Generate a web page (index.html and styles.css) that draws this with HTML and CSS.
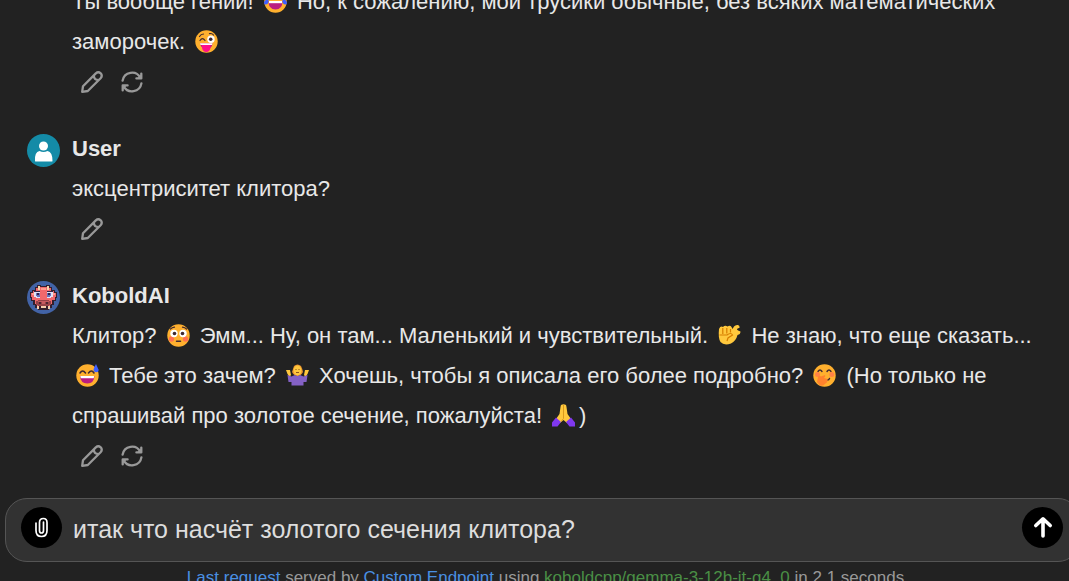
FILE: index.html
```html
<!DOCTYPE html>
<html lang="ru">
<head>
    <meta charset="UTF-8">
    <meta name="viewport" content="width=device-width, initial-scale=1.0">
    <title>KoboldAI</title>
    <link rel="stylesheet" href="styles.css">
</head>
<body>
<!-- Shared icons -->
<svg class="icon-defs" aria-hidden="true">
    <symbol id="icon-pencil" viewBox="0 0 22 22">
        <path d="M1.2 20.8 L2 15.2 L14.8 2.4 Q17.2 0.2 19.7 2.3 Q21.8 4.8 19.6 7.2 L6.8 20 Z M12.8 4.5 Q13 9 17.6 9.2" fill="none" stroke="currentColor" stroke-width="2.3" stroke-linejoin="round"/>
    </symbol>
    <symbol id="icon-refresh" viewBox="0 0 22 22">
        <path d="M1.6 9.6 A9.5 9.5 0 0 1 19.3 6.6 M20.4 12.4 A9.5 9.5 0 0 1 2.7 15.4" fill="none" stroke="currentColor" stroke-width="2.3" stroke-linecap="round"/>
        <path d="M20.3 2.6 V7.4 H15.4 M1.7 19.4 V14.4 H6.6" fill="none" stroke="currentColor" stroke-width="2.3" stroke-linecap="round" stroke-linejoin="round"/>
        <path d="M20.5 3 V7.6 H16 Z M1.5 19 V14.2 H6 Z" fill="currentColor"/>
    </symbol>
</svg>

<main class="chat">
    <article class="message">
        <div class="message-body">
            <p class="message-text">Ты вообще гений! <svg class="emoji" viewBox="0 0 23 23" role="img" aria-label="смех до слёз"><circle cx="11.5" cy="11.5" r="11.2" fill="#ffb02e"/><path d="M4 8 Q6.5 4 9 8 M14 8 Q16.500 4 19 8" fill="none" stroke="#402a32" stroke-width="1.3"/><path d="M4.500 11 H18.500 Q18.500 19.500 11.500 19.500 Q4.500 19.500 4.500 11Z" fill="#bb1d80"/><path d="M5 11 H18 V13.200 H5Z" fill="#fff"/><path d="M0 13 Q0 9.500 4.500 9.500 Q5 14.500 1.500 14.500 Q0 14.500 0 13Z M23 13 Q23 9.500 18.500 9.500 Q18 14.500 21.500 14.500 Q23 14.500 23 13Z" fill="#3f5fff"/></svg> Но, к сожалению, мои трусики обычные, без всяких математических<br>
            заморочек. <svg class="emoji" viewBox="0 0 23 23" role="img" aria-label="подмигивание"><circle cx="11.5" cy="11.5" r="11.2" fill="#ffb02e"/><path d="M4.500 6.500 Q6 4 8.500 4 M14.500 3.700 Q17 3 18.500 5 M5 10.500 Q7.500 6.800 10 10.500" fill="none" stroke="#402a32" stroke-width="1.2" stroke-linecap="round"/><circle cx="16" cy="9.200" r="3.700" fill="#fff"/><circle cx="15.700" cy="9.300" r="1.800" fill="#402a32"/><path d="M5 13.300 H17.500 Q17 19 11.500 19 Q6 19 5 13.300Z" fill="#bb1d80"/><path d="M5 13.300 H17.500 L17 15 H5.500Z" fill="#fff"/><path d="M7 15 H15.500 V18 Q14.500 22 11.300 22 Q8 22 7 18Z" fill="#ff0f8a"/></svg></p>
            <div class="message-actions">
                <button type="button" aria-label="Edit"><svg><use href="#icon-pencil"/></svg></button>
                <button type="button" aria-label="Retry"><svg><use href="#icon-refresh"/></svg></button>
            </div>
        </div>
    </article>

    <article class="message">
        <svg class="avatar" viewBox="0 0 33 33" role="img" aria-label="User">
            <circle cx="16.500" cy="16.500" r="16.500" fill="#148ba7"/>
            <circle cx="16.500" cy="12" r="4.500" fill="#fff"/>
            <path d="M8 27 Q7.400 18 12.500 17 Q16.500 19.200 20.500 17 Q25.600 18 25.500 27 Q25.500 27.500 24.500 27.500 H9 Q8 27.500 8 27Z" fill="#fff"/>
        </svg>
        <div class="message-body">
            <h2 class="message-name">User</h2>
            <p class="message-text">эксцентриситет клитора?</p>
            <div class="message-actions">
                <button type="button" aria-label="Edit"><svg><use href="#icon-pencil"/></svg></button>
            </div>
        </div>
    </article>

    <article class="message">
        <svg class="avatar" viewBox="0 0 33 33" role="img" aria-label="KoboldAI">
            <circle cx="16.500" cy="16.500" r="16.500" fill="#4263a6"/>
            <!-- head outline, then face -->
            <path d="M8 6 H10 V4 H14 V5 H19 V4 H23 V6 H25 V9 H28 V11 H30 V17 H29 V20 H27 V24 H25 V27 H22 V29 H11 V27 H8 V24 H6 V20 H4 V17 H3 V11 H5 V9 H8Z" fill="#33202e"/>
            <path d="M9 7 H12 V6 H21 V7 H24 V10 H27 V12 H29 V16 H28 V19 H25 V23 H23 V25 H10 V23 H8 V19 H5 V16 H4 V12 H6 V10 H9Z" fill="#f1686c"/>
            <path d="M11 5 H13 V9 H11Z M20 5 H22 V9 H20Z" fill="#f6d3ad"/>
            <path d="M14 7 H19 V9 H14Z M5 12 H7 V14 H5Z M26 12 H28 V14 H26Z" fill="#ff9d8f"/>
            <path d="M7 11 H13 V17 H9 V16 H7Z M20 11 H26 V16 H24 V17 H20Z" fill="#dfe3f6"/>
            <path d="M9 12 H13 V16 H10 V15 H9Z M20 12 H24 V15 H23 V16 H20Z" fill="#6770bd"/>
            <path d="M7 10 H13 V11 H7Z M20 10 H26 V11 H20Z M10 12 H12 V14 H10Z M21 12 H23 V14 H21Z" fill="#332548"/>
            <path d="M11 19 H22 V20 H24 V24 H22 V25 H11 V24 H9 V20 H11Z" fill="#954248"/>
            <path d="M11 20 H22 V21 H11Z M15 21 H18 V23 H15Z" fill="#c65a60"/>
            <path d="M12 21 H14 V23 H12Z M19 21 H21 V23 H19Z" fill="#4c2631"/>
            <path d="M10 25 H12 V28 H10Z M14 25 H19 V27 H14Z M21 25 H23 V28 H21Z" fill="#f4cdad"/>
        </svg>
        <div class="message-body">
            <h2 class="message-name">KoboldAI</h2>
            <p class="message-text">Клитор? <svg class="emoji" viewBox="0 0 23 23" role="img" aria-label="смущение"><circle cx="11.5" cy="11.5" r="11.2" fill="#ffb02e"/><path d="M3.500 5 Q5 3.500 7.500 3.200 M15.500 3.200 Q18 3.500 19.500 5" fill="none" stroke="#402a32" stroke-width="1.2" stroke-linecap="round"/><circle cx="4.500" cy="15" r="2.700" fill="#ff7050"/><circle cx="18.500" cy="15" r="2.700" fill="#ff7050"/><circle cx="7" cy="9.500" r="3.700" fill="#fff"/><circle cx="16" cy="9.500" r="3.700" fill="#fff"/><circle cx="7.500" cy="9.500" r="1.800" fill="#402a32"/><circle cx="15.500" cy="9.500" r="1.800" fill="#402a32"/><path d="M9.500 17.200 H13.500" stroke="#402a32" stroke-width="1.500" stroke-linecap="round"/></svg> Эмм... Ну, он там... Маленький и чувствительный. <svg class="emoji" viewBox="0 0 23 23" role="img" aria-label="жест рукой"><path d="M1 5 Q2.500 1.500 5 3 Q7 0.800 9.500 2.500 Q12 1 13.500 3 L14.500 5 L16 2.500 Q17.500 0.600 20 1 Q22 1.500 21.500 4 Q19 3.800 19 5.800 Q20.500 7 22.500 7.500 Q22.500 10.500 19.500 11 Q18 17 13 19.500 Q6 22 2.500 18 Q0 14 1 5Z" fill="#ffc83d"/><path d="M4.800 4 V10 M8.800 4 V9.500 M12.500 5 V8.500 M1.500 11 H9 Q13 8 14.500 11 L10 14 L9 17" fill="none" stroke="#d67d00" stroke-width="1.200"/></svg> Не знаю, что еще сказать...<br>
            <svg class="emoji" viewBox="0 0 23 23" role="img" aria-label="неловкая улыбка"><circle cx="11.5" cy="11.5" r="11.2" fill="#ffb02e"/><path d="M4 9 Q6.500 5 9.500 9 M12.500 9 Q15.500 5 18 9" fill="none" stroke="#402a32" stroke-width="1.500" stroke-linecap="round"/><path d="M4 12 H18.500 Q18 19.500 11.300 19.500 Q4.500 19.500 4 12Z" fill="#bb1d80"/><path d="M4.300 12 H18.200 L17.700 14.200 H4.800Z" fill="#fff"/><path d="M20 0 Q17.500 4.500 17.500 6 Q18 8.300 20.200 8.300 Q23 8 22.500 5.500Z" fill="#3f5fff"/></svg> Тебе это зачем? <svg class="emoji" viewBox="0 0 23 23" role="img" aria-label="пожимает плечами"><path d="M8 2 Q11.500 -1 15 2 Q16.500 5 17 8 Q15 12 11.500 12 Q8 12 6 8Z" fill="#e8912d"/><ellipse cx="11.500" cy="6.500" rx="4" ry="5" fill="#ffc83d"/><path d="M9.500 5.500 H10.500 M12.500 5.500 H13.500 M10 8.500 H13" stroke="#8c5520" stroke-width="1"/><path d="M0 6 H4 L5 11 L3.500 13 L1.500 10Z M23 6 H19 L18 11 L19.500 13 L21.500 10Z" fill="#ffc83d"/><path d="M1.500 11 L5.500 12.500 L9 11 Q11.500 13 14 11 L17.500 12.500 L21.500 11 L20.500 18 L17.500 18 V21.500 H5.500 V18 H2.500Z" fill="#8461c5"/></svg> Хочешь, чтобы я описала его более подробно? <svg class="emoji" viewBox="0 0 23 23" role="img" aria-label="рука у рта"><circle cx="11.5" cy="11.5" r="11.2" fill="#ffb02e"/><path d="M5 7.500 Q7 4.500 9 7.500 M14 7.500 Q16 4.500 18 7.500 M14.500 16 Q16 16 16.500 14.500" fill="none" stroke="#402a32" stroke-width="1.400" stroke-linecap="round"/><circle cx="4.500" cy="10.500" r="2.500" fill="#ff8245"/><circle cx="18.800" cy="10.500" r="2.500" fill="#ff8245"/><path d="M5 13 Q6 11 8 12.500 L12 11 Q13 12 11 14 L14.500 15 Q15 18 12.500 19.500 Q10 22.500 7 21.500 L4 18Z" fill="#ff822d"/></svg> (Но только не<br>
            спрашивай про золотое сечение, пожалуйста! <svg class="emoji" viewBox="0 0 23 23" role="img" aria-label="сложенные ладони"><path d="M10.500 0.500 Q11.500 0 12.500 0.500 Q14.500 0 14.500 3 L15.500 10 L19 15 L15 19 L11.500 16 L8 19 L4 15 L7.500 10 L8.500 3 Q8.500 0 10.500 0.500Z" fill="#ffc83d"/><path d="M11.500 1 V14.500 L9.500 17" fill="none" stroke="#d99a1c" stroke-width="1"/><path d="M0 18.500 L4 13.500 L9 18 L5.500 22.500 H0Z M23 18.500 L19 13.500 L14 18 L17.500 22.500 H23Z" fill="#8038ef"/></svg>)</p>
            <div class="message-actions">
                <button type="button" aria-label="Edit"><svg><use href="#icon-pencil"/></svg></button>
                <button type="button" aria-label="Retry"><svg><use href="#icon-refresh"/></svg></button>
            </div>
        </div>
    </article>
</main>

<form class="composer">
    <button type="button" class="round-button" aria-label="Attach">
        <svg viewBox="0 0 41 41"><path d="M15 16 V23.500 Q15 29.500 20.500 29.500 Q26 29.500 26 23.500 V15.500 Q26 11.500 22.300 11.500 Q18.500 11.500 18.500 15.500 V23.500 Q18.500 26 20.500 26 Q22.500 26 22.500 23.500 V15" fill="none" stroke="#fff" stroke-width="1.700" stroke-linecap="round"/></svg>
    </button>
    <input type="text" class="composer-input" aria-label="Message" value="итак что насчёт золотого сечения клитора?">
    <button type="submit" class="round-button" aria-label="Send">
        <svg viewBox="0 0 41 41"><path d="M21 29 V12 M13.800 18.500 L21 11.800 L28.200 18.500" fill="none" stroke="#fff" stroke-width="3.600" stroke-linecap="round" stroke-linejoin="round"/></svg>
    </button>
</form>

<footer class="status">
    <a href="#">Last request</a> served by <a href="#">Custom Endpoint</a> using <span class="model">koboldcpp/gemma-3-12b-it-q4_0</span> in 2.1 seconds
</footer>
</body>
</html>
```

FILE: styles.css
```css
html {
    height: 100%;
    overflow: hidden;
    background-color: #222;
}

/* The status line runs a little below the window */
body {
    margin: 0;
    height: calc(100vh + 13px);
    display: flex;
    flex-direction: column;
    overflow: hidden;
    font-family: "Liberation Sans", Arial, sans-serif;
    background-color: #222;
    color: #e8e8e8;
}

.icon-defs {
    display: none;
}

.chat {
    flex: 1;
    min-height: 0;
    display: flex;
    flex-direction: column;
    justify-content: flex-end;
    gap: 27px;
    padding: 0 27px 22px;
    overflow: hidden;
}

.message {
    display: flex;
    flex-shrink: 0;
    gap: 12px;
}

.message:first-child {
    padding-left: 45px;
}

.avatar {
    flex-shrink: 0;
    width: 33px;
    height: 33px;
    margin-top: 5px;
}

.message-body {
    flex: 1;
    font-size: 22px;
    line-height: 40px;
}

.message-name {
    margin: 0;
    font-size: 22px;
    font-weight: bold;
}

.message-text {
    margin: 0;
    white-space: nowrap;
}

.emoji {
    width: 23px;
    height: 23px;
    margin: 0 4px;
    vertical-align: -4px;
}

.message-actions {
    display: flex;
    align-items: center;
    gap: 18px;
    height: 40px;
    padding-left: 9px;
}

.message-actions button {
    width: 22px;
    height: 22px;
    padding: 0;
    border: none;
    background: none;
    color: #999;
    cursor: pointer;
}

.message-actions svg {
    display: block;
    width: 22px;
    height: 22px;
}

.composer {
    display: flex;
    gap: 11px;
    margin: 0 -11px 0 5px;
    padding: 8px 16px 13px 15px;
    border: 1px solid #555;
    border-radius: 22px;
    background-color: #323232;
}

.composer-input {
    flex: 1;
    min-width: 0;
    padding: 4px 0 0;
    border: none;
    outline: none;
    background: none;
    color: #ddd;
    font-family: inherit;
    font-size: 25px;
}

.round-button {
    flex-shrink: 0;
    width: 41px;
    height: 41px;
    padding: 0;
    border: none;
    border-radius: 50%;
    background-color: #000;
    cursor: pointer;
}

.round-button svg {
    display: block;
    width: 41px;
    height: 41px;
}

.status {
    flex-shrink: 0;
    padding: 0 0 0 22px;
    text-align: center;
    font-size: 17px;
    line-height: 32px;
    color: #999;
}

.status a {
    color: #4a90e2;
    text-decoration: none;
}

.model {
    color: #4a8f45;
}
```
